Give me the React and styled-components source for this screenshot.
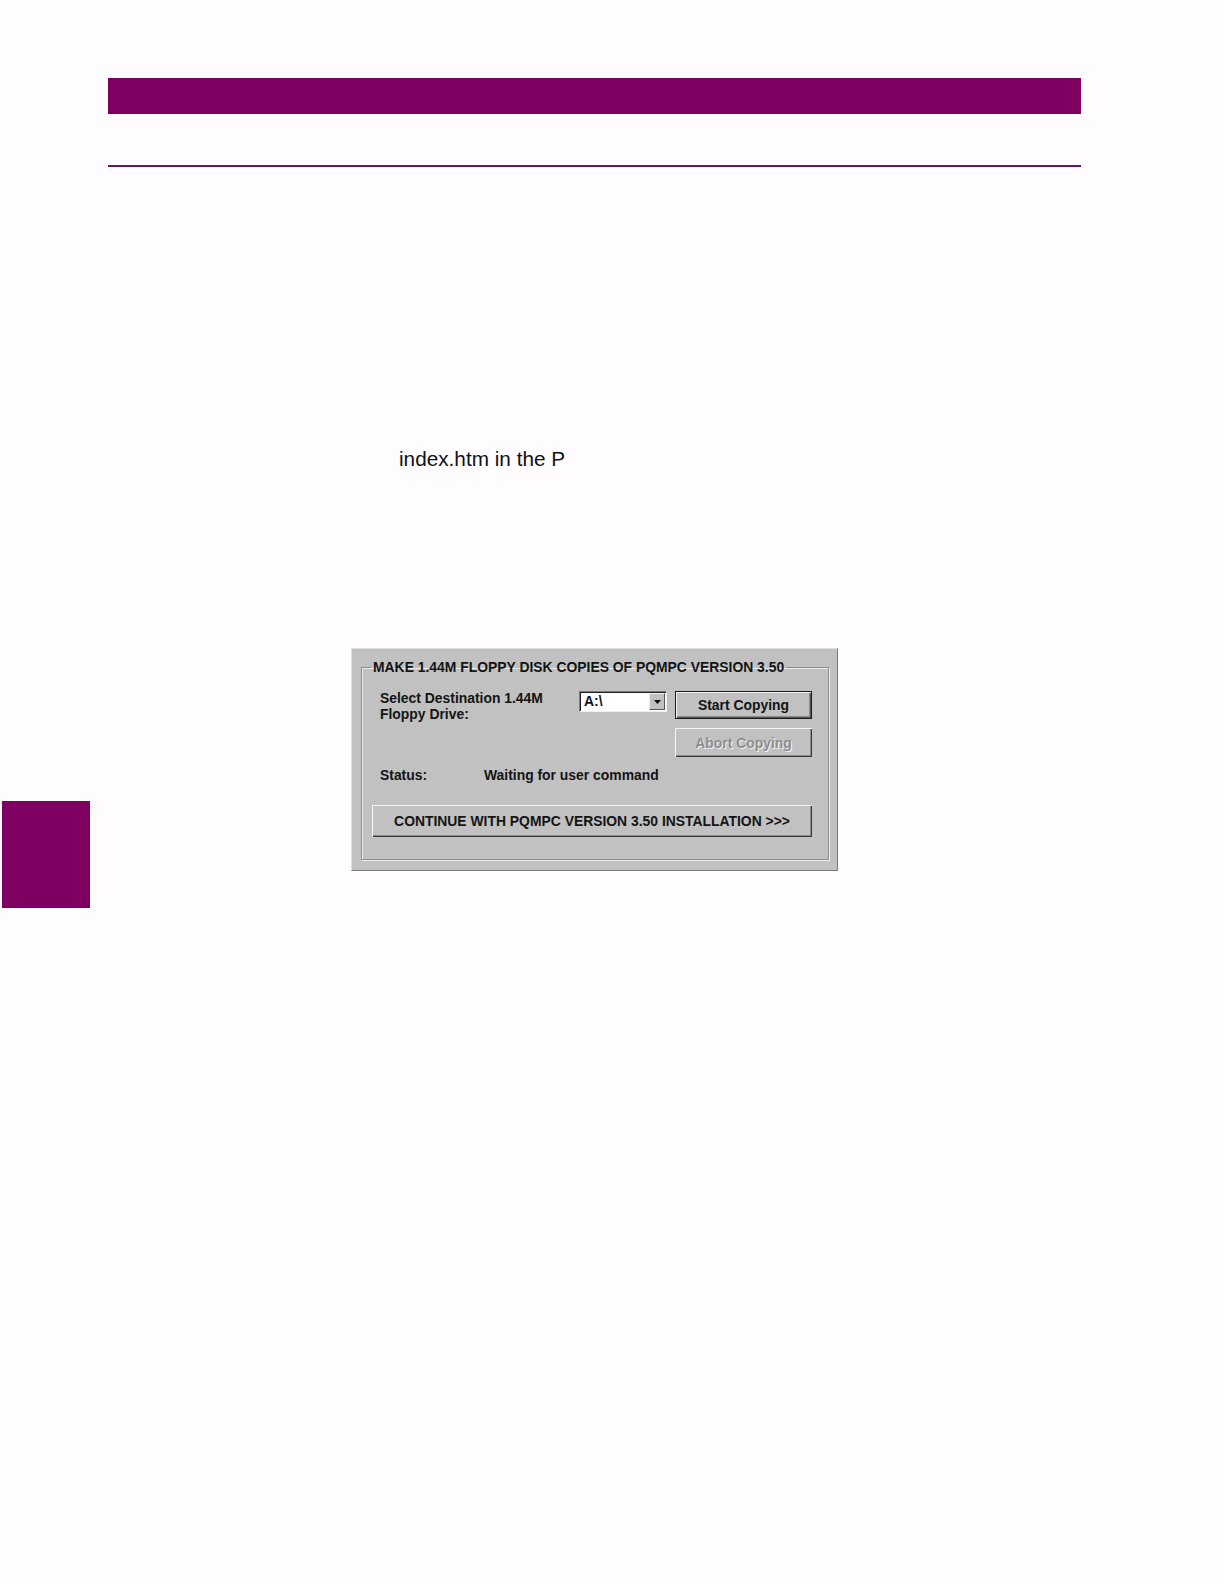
import React from "react";
import styled, { createGlobalStyle } from "styled-components";

const GlobalStyle = createGlobalStyle`
  html, body {
    margin: 0;
    padding: 0;
    background: #fefcfe;
  }
  body {
    font-family: "Liberation Sans", Arial, sans-serif;
  }
`;

const purple = "#800062";

const Page = styled.div`
  width: 1224px;
  min-height: 1584px;
  padding-top: 78px;
  box-sizing: border-box;
`;

const Header = styled.div`
  margin-left: 108px;
  width: 973px;
`;

const HeaderBar = styled.div`
  height: 36px;
  background: ${purple};
`;

const Rule = styled.div`
  margin-top: 51px;
  height: 2px;
  background: #6e1060;
`;

const Body = styled.div`
  display: flex;
  align-items: flex-start;
`;

const Gutter = styled.div`
  width: 90px;
  padding-left: 2px;
  box-sizing: border-box;
  flex-shrink: 0;
`;

const SideTab = styled.div`
  margin-top: 634px;
  width: 88px;
  height: 107px;
  background: ${purple};
`;

const Main = styled.div`
  display: flex;
  flex-direction: column;
`;

const BodyText = styled.p`
  margin: 279px 0 0 309px;
  font-size: 20.75px;
  line-height: 25px;
  color: #111;
`;

const Dialog = styled.div`
  margin: 177px 0 0 261px;
  width: 487px;
  box-sizing: border-box;
  padding: 10px 8px 10px 9px;
  background: #c1c1c1;
  border-top: 1px solid #dedede;
  border-left: 1px solid #dedede;
  border-right: 1px solid #777;
  border-bottom: 1px solid #777;
  font-family: "Liberation Sans", Arial, sans-serif;
  font-size: 13.9px;
  font-weight: bold;
  color: #141414;
`;

const Group = styled.fieldset`
  margin: 0;
  padding: 16px 15px 22px 10px;
  border: 1px solid #8e8e8e;
  box-shadow: inset 1px 1px 0 #ececec, 1px 1px 0 #ececec;
`;

const Legend = styled.legend`
  margin-left: -1px;
  padding: 0 2px;
  line-height: 16px;
`;

const Grid = styled.div`
  display: grid;
  grid-template-columns: 8px 199px 96px 137px;
  grid-template-rows: 28px 29px;
  row-gap: 9px;
`;

const Label = styled.div`
  grid-column: 2;
  margin-top: -1px;
  line-height: 16px;
`;

const Combo = styled.div`
  grid-column: 3;
  width: 88px;
  height: 21px;
  box-sizing: border-box;
  display: flex;
  align-items: stretch;
  background: #fff;
  border-top: 1px solid #7a7a7a;
  border-left: 1px solid #7a7a7a;
  border-right: 1px solid #efefef;
  border-bottom: 1px solid #efefef;
  box-shadow: inset 1px 1px 0 #202020;
`;

const ComboValue = styled.span`
  flex: 1;
  padding: 2px 0 0 4px;
  line-height: 15px;
`;

const ComboButton = styled.span`
  width: 16px;
  margin: 1px 1px 1px 0;
  background: #c1c1c1;
  border-top: 1px solid #f0f0f0;
  border-left: 1px solid #f0f0f0;
  border-right: 1px solid #555;
  border-bottom: 1px solid #555;
  box-sizing: border-box;
  display: flex;
  align-items: center;
  justify-content: center;
`;

const Button = styled.button`
  grid-column: ${(p) => p.$col || "auto"};
  grid-row: ${(p) => p.$row || "auto"};
  width: ${(p) => p.$width || "137px"};
  height: ${(p) => p.$height || "28px"};
  margin: 0;
  padding: 0;
  font: inherit;
  background: #c1c1c1;
  color: ${(p) => (p.disabled ? "#8e8e8e" : "#141414")};
  text-shadow: ${(p) => (p.disabled ? "1px 1px 0 #f4f4f4" : "none")};
  border: ${(p) => (p.$default ? "1px solid #1a1a1a" : "none")};
  box-shadow: ${(p) =>
    p.$default
      ? "inset 1px 1px 0 #f4f4f4, inset -1px -1px 0 #555, inset -2px -2px 0 #8a8a8a"
      : "inset 1px 1px 0 #f4f4f4, inset -1px -1px 0 #3a3a3a, inset -2px -2px 0 #8a8a8a"};
  box-sizing: border-box;
  cursor: default;
`;

const StatusRow = styled.div`
  display: flex;
  margin: 9px 0 0 8px;
  line-height: 18px;
`;

const StatusLabel = styled.span`
  width: 104px;
`;

const ContinueRow = styled.div`
  margin-top: 21px;
`;

const App = () => (
  <>
    <GlobalStyle />
    <Page>
      <Header>
        <HeaderBar />
        <Rule />
      </Header>
      <Body>
        <Gutter>
          <SideTab />
        </Gutter>
        <Main>
          <BodyText>index.htm in the P</BodyText>
          <Dialog>
            <Group>
              <Legend>MAKE 1.44M FLOPPY DISK COPIES OF PQMPC VERSION 3.50</Legend>
              <Grid>
                <Label>
                  Select Destination 1.44M
                  <br />
                  Floppy Drive:
                </Label>
                <Combo>
                  <ComboValue>A:\</ComboValue>
                  <ComboButton>
                    <svg width="7" height="4" viewBox="0 0 7 4">
                      <polygon points="0,0 7,0 3.5,4" fill="#111" />
                    </svg>
                  </ComboButton>
                </Combo>
                <Button $col={4} $default>
                  Start Copying
                </Button>
                <Button $col={4} $row={2} $height="29px" disabled>
                  Abort Copying
                </Button>
              </Grid>
              <StatusRow>
                <StatusLabel>Status:</StatusLabel>
                <span>Waiting for user command</span>
              </StatusRow>
              <ContinueRow>
                <Button $width="440px" $height="32px">
                  CONTINUE WITH PQMPC VERSION 3.50 INSTALLATION &gt;&gt;&gt;
                </Button>
              </ContinueRow>
            </Group>
          </Dialog>
        </Main>
      </Body>
    </Page>
  </>
);

export default App;
